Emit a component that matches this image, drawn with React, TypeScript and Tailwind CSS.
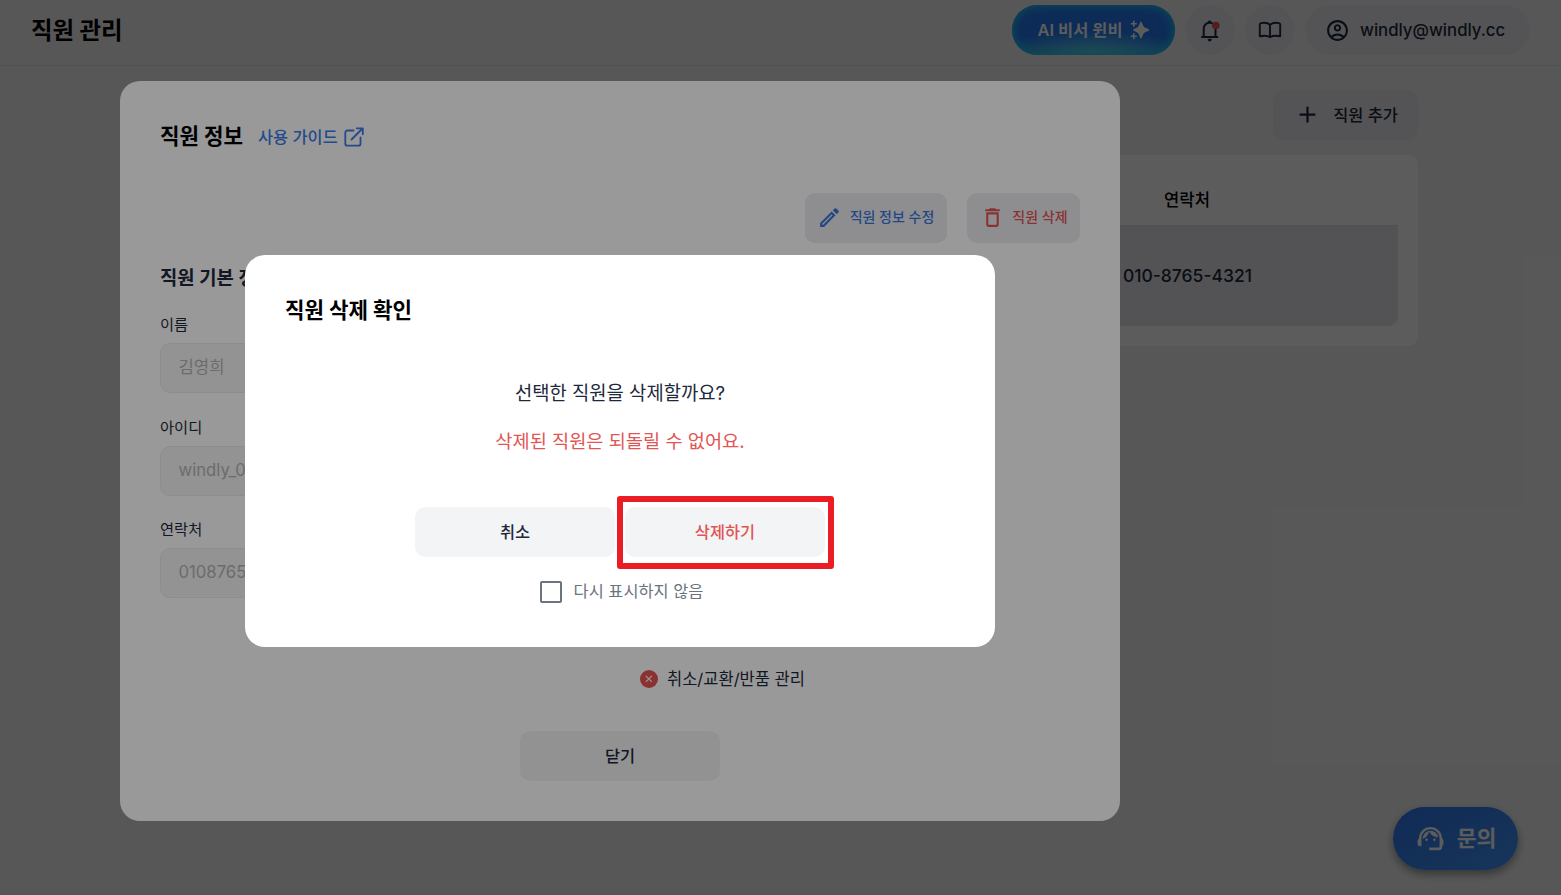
import type { ReactNode } from "react";
import { twMerge } from "tailwind-merge";
import {
  MdAdd,
  MdDeleteOutline,
  MdOutlineAccountCircle,
  MdOutlineEdit,
  MdSupportAgent,
} from "react-icons/md";

const fields = [
  { label: "이름", value: "김영희" },
  { label: "아이디", value: "windly_01" },
  { label: "연락처", value: "01087654321" },
];

function BellIcon() {
  return (
    <svg width="24" height="24" viewBox="0 0 24 24" fill="none" stroke="#1e293b">
      <path
        d="M3.2 19h17M5.700 18.500v-7.700c0-3.400 2.500-6 5.900-6s5.900 2.600 5.900 6v7.700"
        strokeWidth="2"
      />
      <path d="M10 4.500a1.600 1.600 0 0 1 3.200 0zM10 21.300h3.400a1.700 1.700 0 0 1-3.400 0z" fill="#1e293b" />
      <circle cx="17.800" cy="7.500" r="3.800" fill="#e95252" stroke="none" />
    </svg>
  );
}

function BookIcon() {
  return (
    <svg
      width="24"
      height="24"
      viewBox="0 0 24 24"
      fill="none"
      stroke="#1e293b"
      strokeWidth="1.900"
      strokeLinejoin="round"
    >
      <path d="M12 6.800C10.300 5 6 4.600 3 5.100c-.8.1-1.200.5-1.200 1.200v12c3.500-.8 8-.5 10.200.8 2.200-1.300 6.700-1.600 10.200-.8v-12c0-.7-.4-1.100-1.200-1.200C18 4.600 13.700 5 12 6.800zv12" />
    </svg>
  );
}

function SparkleIcon() {
  return (
    <svg width="20" height="20" viewBox="0 0 20 20" fill="white">
      <path d="M11 1.500c.7 0 1.900 4.100 3 5.300 1.200 1.200 5.500 2.400 5.500 3.200s-4.300 2-5.500 3.200c-1.100 1.200-2.300 5.300-3 5.300s-1.900-4.100-3-5.300C6.800 12 3 10.800 3 10s3.800-2 5-3.200c1.100-1.200 2.300-5.300 3-5.300z" />
      <path d="M3.800.8v6M.8 3.800h6M3.800 13.200v6M.8 16.200h6" stroke="white" strokeWidth="1.600" />
    </svg>
  );
}

function ExternalIcon() {
  return (
    <svg
      width="20"
      height="20"
      viewBox="0 0 20 20"
      fill="none"
      stroke="#3b7ce8"
      strokeWidth="1.800"
      strokeLinecap="round"
      strokeLinejoin="round"
    >
      <path d="M9.500 3.500H3.300A2 2 0 0 0 1.300 5.500v11.200a2 2 0 0 0 2 2h11.200a2 2 0 0 0 2-2V10.500M12.800 1.300h6v6M18.500 1.500L7.500 12.500" />
    </svg>
  );
}

function Button({ className, children }: { className?: string; children: ReactNode }) {
  return (
    <button
      className={twMerge(
        "flex h-[50px] items-center justify-center rounded-[10px] bg-[#f3f4f6] text-[16.4px] leading-6 font-medium text-[#1e293b]",
        className
      )}
    >
      {children}
    </button>
  );
}

function Header() {
  return (
    <header className="flex h-[66px] items-start justify-between border-b border-[#dcdee2] pt-[5px] pr-[31px] pl-[31px]">
      <h1 className="mt-2 text-[23.4px] leading-9 font-bold text-black">직원 관리</h1>
      <div className="flex gap-[10px]">
        <button className="flex h-[50px] w-[163px] items-center justify-center gap-[7px] rounded-full bg-[radial-gradient(ellipse_65%_60%_at_50%_110%,#78f0e8,#2c8cf0_85%,#2378f4)] text-[16.4px] font-semibold text-white shadow-[inset_0_0_9px_2px_#20c8ea]">
          AI 비서 윈비
          <SparkleIcon />
        </button>
        <div className="flex size-[50px] items-center justify-center rounded-full bg-[#ebebf1]">
          <BellIcon />
        </div>
        <div className="flex size-[50px] items-center justify-center rounded-full bg-[#ebebf1]">
          <BookIcon />
        </div>
        <div className="flex h-[50px] w-[225px] items-center gap-[10px] rounded-full bg-[#ebebf1] pl-5 text-[16.750px] font-medium text-[#1e293b]">
          <MdOutlineAccountCircle className="size-[25px]" />
          <span className="pt-[2px]">windly@windly.cc</span>
        </div>
      </div>
    </header>
  );
}

function EmployeeList() {
  return (
    <main className="mr-[143px] ml-auto flex w-[1275px] flex-col items-end pt-6">
      <Button className="w-[145px] gap-3 bg-[#e9e9ef] pb-px pl-px">
        <MdAdd className="size-[27px]" />
        직원 추가
      </Button>
      <section className="mt-[15px] h-[191px] w-full rounded-[10px] bg-white p-5">
        <div className="flex h-[50px] items-center justify-end pr-[159px]">
          <div className="w-[104px] text-center text-[16.6px] font-medium text-black">연락처</div>
        </div>
        <div className="flex h-[101px] items-center justify-end rounded-b-[10px] border-t border-[#dcdee2] bg-[#e7e7ed] pr-[146px] text-[17.5px] font-medium text-[#1e293b]">
          010-8765-4321
        </div>
      </section>
    </main>
  );
}

function EmployeeDialog() {
  return (
    <section className="mt-[81px] ml-[120px] flex h-[740px] w-[1000px] flex-col rounded-[20px] bg-white px-10 pt-[39px]">
      <div className="flex h-[33px] items-center">
        <h2 className="text-[21.2px] font-bold text-black">직원 정보</h2>
        <a className="ml-[15px] flex items-center gap-[6px] pt-[2px] text-[16.4px] font-medium text-[#3b7ce8]">
          사용 가이드
          <ExternalIcon />
        </a>
      </div>
      <div className="mt-10 flex justify-end gap-5">
        <Button className="w-[142px] gap-2 bg-[#ededf1] pr-px pb-[2px] text-sm text-[#3b76dd]">
          <MdOutlineEdit className="size-[25px]" />
          직원 정보 수정
        </Button>
        <Button className="w-[113px] gap-[7px] bg-[#ededf1] pb-[2px] pl-px text-sm text-[#e25555]">
          <MdDeleteOutline className="size-[25px]" />
          직원 삭제
        </Button>
      </div>
      <div className="mt-[21px] h-[340px] text-[#1e293b]">
        <div className="w-[440px]">
          <h3 className="pt-px text-[18.8px] leading-[28px] font-semibold">직원 기본 정보</h3>
          {fields.map((field) => (
            <div key={field.label} className="mt-[18px] h-[84.500px]">
              <div className="text-[15.3px] leading-[27px]">{field.label}</div>
              <div className="mt-[5px] flex h-[50px] items-center rounded-[10px] border border-[#ececec] bg-[#f5f5f5] pl-[17.500px] text-[16.7px] text-[#b4b4b4]">
                {field.value}
              </div>
            </div>
          ))}
        </div>
      </div>
      <div className="mt-[59px] ml-[480px] flex h-8 items-center gap-[9px] text-[16.5px] text-[#1e293b]">
        <svg width="18" height="18" viewBox="0 0 18 18">
          <circle cx="9" cy="9" r="9" fill="#e95252" />
          <path d="M5.800 5.800l6 6M11.800 5.800l-6 6" stroke="white" strokeWidth="1.200" />
        </svg>
        취소/교환/반품 관리
      </div>
      <Button className="mx-auto mt-auto mb-10 w-[200px]">닫기</Button>
    </section>
  );
}

function DeleteConfirm() {
  return (
    <section className="mt-[255px] ml-[245px] flex h-[392px] w-[750px] flex-col items-center rounded-[20px] bg-white px-10 pt-[39px]">
      <h2 className="self-start text-[21.2px] leading-[32px] font-bold text-black">직원 삭제 확인</h2>
      <p className="mt-[52px] text-[18.8px] leading-[32px] text-[#1e293b]">선택한 직원을 삭제할까요?</p>
      <p className="mt-[15px] text-[18.650px] leading-[32px] text-[#e25555]">삭제된 직원은 되돌릴 수 없어요.</p>
      <div className="mt-[50px] flex gap-[10px]">
        <Button className="w-[200px]">취소</Button>
        <div className="relative">
          <Button className="w-[200px] text-[#e25555]">삭제하기</Button>
          <div className="absolute -top-[11px] -left-[8px] h-[73px] w-[217px] rounded-[3px] border-6 border-[#ec1c24]" />
        </div>
      </div>
      <label className="mt-[22px] ml-[3px] flex items-center gap-3 text-[16.4px] leading-[25px] text-[#6b7280]">
        <span className="size-[22px] rounded-[2px] border-2 border-[#6b7280]" />
        다시 표시하지 않음
      </label>
    </section>
  );
}

function SupportButton() {
  return (
    <button className="absolute top-[807px] left-[1393px] flex h-[63px] w-[125px] items-center justify-center gap-[11px] rounded-full bg-linear-to-br from-[#2f78f0] to-[#4294f8] text-[21.6px] font-bold text-white shadow-[0_4px_10px_rgba(0,0,0,0.4)]">
      <MdSupportAgent className="size-[31px]" />
      문의
    </button>
  );
}

export default function App() {
  return (
    <div className="relative h-[895px] w-[1561px] overflow-hidden bg-[#f4f4f4] font-['Inter','Noto_Sans_CJK_KR',sans-serif] text-base">
      <Header />
      <EmployeeList />
      <SupportButton />
      <div className="absolute inset-0 flex items-start bg-black/40">
        <EmployeeDialog />
      </div>
      <div className="absolute inset-0 flex items-start bg-black/40">
        <DeleteConfirm />
      </div>
    </div>
  );
}
